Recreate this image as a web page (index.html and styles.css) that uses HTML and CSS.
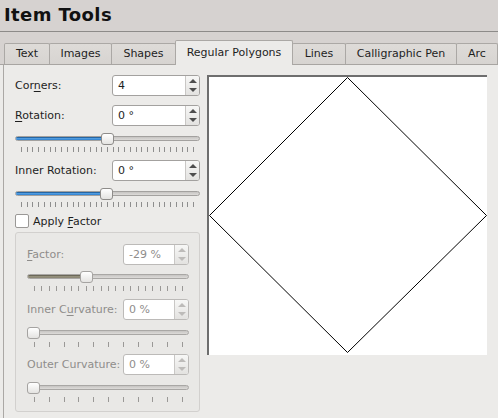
FILE: index.html
```html
<!DOCTYPE html>
<html>
<head>
<meta charset="utf-8">
<link rel="stylesheet" href="styles.css">
</head>
<body>
<div class="header">Item Tools</div>
<div class="tabbar">
  <div class="tab t-text">Text</div>
  <div class="tab t-images">Images</div>
  <div class="tab t-shapes">Shapes</div>
  <div class="tab t-poly active">Regular Polygons</div>
  <div class="tab t-lines">Lines</div>
  <div class="tab t-pen">Calligraphic Pen</div>
  <div class="tab t-arc">Arc</div>
</div>
<div class="panel">
  <div class="controls">
    <div class="row">
      <span class="label">Cor<u>n</u>ers:</span>
      <div class="spin"><span class="val">4</span><span class="btns"><i class="up"></i><i class="down"></i></span></div>
    </div>
    <div class="row gap9">
      <span class="label"><u>R</u>otation:</span>
      <div class="spin"><span class="val">0 °</span><span class="btns"><i class="up"></i><i class="down"></i></span></div>
    </div>
    <div class="slider">
      <div class="track"><div class="fill" style="width:50%"></div></div>
      <div class="handle" style="left:86px"></div>
    </div>
    <div class="ticks wide"></div>
    <div class="row gap8">
      <span class="label">Inner Rotation:</span>
      <div class="spin"><span class="val">0 °</span><span class="btns"><i class="up"></i><i class="down"></i></span></div>
    </div>
    <div class="slider">
      <div class="track"><div class="fill" style="width:50%"></div></div>
      <div class="handle" style="left:85px"></div>
    </div>
    <div class="ticks wide"></div>
    <div class="check-row">
      <span class="checkbox"></span>
      <span class="label">Apply <u>F</u>actor</span>
    </div>
    <div class="group">
      <div class="row">
        <span class="label"><u>F</u>actor:</span>
        <div class="spin small disabled"><span class="val">-29 %</span><span class="btns"><i class="up"></i><i class="down"></i></span></div>
      </div>
      <div class="slider g6 disabled">
        <div class="track"><div class="fill" style="width:36%"></div></div>
        <div class="handle" style="left:53px"></div>
      </div>
      <div class="ticks factor"></div>
      <div class="row gap8">
        <span class="label">Inner C<u>u</u>rvature:</span>
        <div class="spin small disabled"><span class="val">0 %</span><span class="btns"><i class="up"></i><i class="down"></i></span></div>
      </div>
      <div class="slider disabled">
        <div class="track"></div>
        <div class="handle" style="left:0"></div>
      </div>
      <div class="ticks curv"></div>
      <div class="row gap7">
        <span class="label">Outer Curvature:</span>
        <div class="spin small disabled"><span class="val">0 %</span><span class="btns"><i class="up"></i><i class="down"></i></span></div>
      </div>
      <div class="slider disabled">
        <div class="track"></div>
        <div class="handle" style="left:0"></div>
      </div>
      <div class="ticks curv"></div>
    </div>
  </div>
  <div class="preview">
    <svg width="278" height="278" viewBox="0 0 278 278">
      <polygon points="138.5,0.5 277.5,138.5 138.5,275.5 0.5,138.5" fill="none" stroke="#000" stroke-width="1"/>
    </svg>
  </div>
</div>
</body>
</html>
```

FILE: styles.css
```css
html, body {
  margin: 0;
  padding: 0;
}
body {
  width: 498px;
  height: 418px;
  overflow: hidden;
  background: #ecebe9;
  font-family: "DejaVu Sans", sans-serif;
  font-size: 11px;
  color: #1e1e1e;
}
.header {
  height: 32px;
  box-sizing: border-box;
  padding: 4px 0 0 4px;
  background: #d6d2d0;
  font-weight: bold;
  font-size: 18px;
  letter-spacing: 0.4px;
  line-height: 21px;
  color: #111;
  border-bottom: 1px solid #8d8b89;
}
.tabbar {
  display: flex;
  align-items: flex-end;
  height: 33px;
  padding-left: 5px;
  background: #d6d2d0;
  box-shadow: inset 0 -1px #a8a5a2;
}
.tab {
  height: 21px;
  box-sizing: border-box;
  margin: 0 0 1px -1px;
  border: 1px solid #aba8a5;
  border-bottom: none;
  border-radius: 2px 2px 0 0;
  background: linear-gradient(#dedbd8, #d7d4d1);
  line-height: 20px;
  text-align: center;
  color: #1e1e1e;
  flex: none;
}
.t-text { width: 46px; }
.t-images { width: 63px; }
.t-shapes { width: 65px; }
.t-poly { width: 118px; }
.t-lines { width: 54px; }
.t-pen { width: 112px; }
.t-arc { width: 42px; }
.tab.active {
  height: 25px;
  margin-bottom: 0;
  padding-top: 2px;
  background: #ecebe9;
}
.panel {
  display: flex;
  gap: 7px;
  margin-left: 3px;
  height: 353px;
  box-sizing: border-box;
  padding: 10px 0 0 11px;
  border-left: 1px solid #aba8a5;
}
.controls {
  width: 185px;
  display: flex;
  flex-direction: column;
}
.row {
  display: flex;
  align-items: center;
  justify-content: space-between;
  height: 21px;
  flex: none;
}
.gap9 { margin-top: 9px; }
.gap8 { margin-top: 8px; }
.gap7 { margin-top: 7px; }
.label u {
  text-decoration: underline;
  text-underline-offset: 2px;
}
.spin {
  width: 88px;
  height: 21px;
  box-sizing: border-box;
  border: 1px solid #a3a19f;
  border-radius: 3px;
  background: #fff;
  display: flex;
}
.spin.small { width: 66px; }
.val {
  flex: 1;
  padding-left: 5px;
  line-height: 19px;
  color: #1e1e1e;
}
.btns {
  width: 13px;
  border-left: 1px solid #c9c7c5;
  border-radius: 0 2px 2px 0;
  background: linear-gradient(#f7f7f6, #e3e2e0);
  display: flex;
  flex-direction: column;
}
.btns i {
  flex: 1;
  display: flex;
  align-items: center;
  justify-content: center;
}
.btns i::after {
  content: "";
  border-left: 4px solid transparent;
  border-right: 4px solid transparent;
}
.btns .up::after { border-bottom: 4px solid #4e4e4e; }
.btns .down::after { border-top: 4px solid #4e4e4e; }
.spin.disabled { border-color: #bcbab8; }
.spin.disabled .val { color: #8f8d8b; }
.spin.disabled .btns .up::after { border-bottom-color: #bdbbb9; }
.spin.disabled .btns .down::after { border-top-color: #bdbbb9; }

.slider {
  position: relative;
  height: 12px;
  margin-top: 7px;
  padding-top: 3px;
  box-sizing: border-box;
  flex: none;
}
.slider.g6 { margin-top: 6px; }
.track {
  height: 5px;
  box-sizing: border-box;
  border: 1px solid #a3a19f;
  border-radius: 3px;
  background: linear-gradient(#c6c4c2, #dddbd9);
  overflow: hidden;
}
.fill {
  height: 100%;
  background: linear-gradient(#72b6ee, #2d80d0);
  box-shadow: inset 0 1px #2666a3;
}
.slider.disabled .track { border-color: #a9a7a5; }
.slider.disabled .fill {
  background: linear-gradient(#9d9986, #8a8673);
  box-shadow: inset 0 1px #6b6858;
}
.handle {
  position: absolute;
  top: 0;
  width: 13px;
  height: 12px;
  box-sizing: border-box;
  border: 1px solid #8e8c8a;
  border-radius: 3px;
  background: linear-gradient(#ffffff, #e4e3e1);
}
.slider.disabled .handle { border-color: #a5a3a1; }

.ticks {
  height: 5px;
  flex: none;
}
.ticks.wide {
  width: 173px;
  margin: 2px 0 0 6px;
  background: repeating-linear-gradient(to right, #8e8e8e 0 1px, transparent 1px 5.7333px);
}
.ticks.factor {
  width: 149px;
  margin: 3px 0 0 7px;
  background: repeating-linear-gradient(to right, #9a9896 0 1px, transparent 1px 7.4px);
}
.ticks.curv {
  width: 149px;
  margin: 3px 0 0 7px;
  background: repeating-linear-gradient(to right, #9a9896 0 1px, transparent 1px 14.8px);
}
.check-row {
  display: flex;
  align-items: center;
  gap: 4px;
  height: 14px;
  margin-top: 7px;
  flex: none;
}
.checkbox {
  width: 14px;
  height: 14px;
  box-sizing: border-box;
  border: 1px solid #9a9896;
  border-radius: 2px;
  background: #fff;
}
.group {
  margin-top: 4px;
  height: 180px;
  box-sizing: border-box;
  border: 1px solid #d2d0ce;
  border-radius: 3px;
  background: #e9e8e6;
  padding: 11px 10px 0 11px;
  color: #8f8d8b;
  display: flex;
  flex-direction: column;
}
.preview {
  width: 280px;
  height: 280px;
  box-sizing: border-box;
  border-top: 2px solid #6e6e6e;
  border-left: 2px solid #6e6e6e;
  background: #fff;
  flex: none;
}
.preview svg {
  display: block;
}
```
